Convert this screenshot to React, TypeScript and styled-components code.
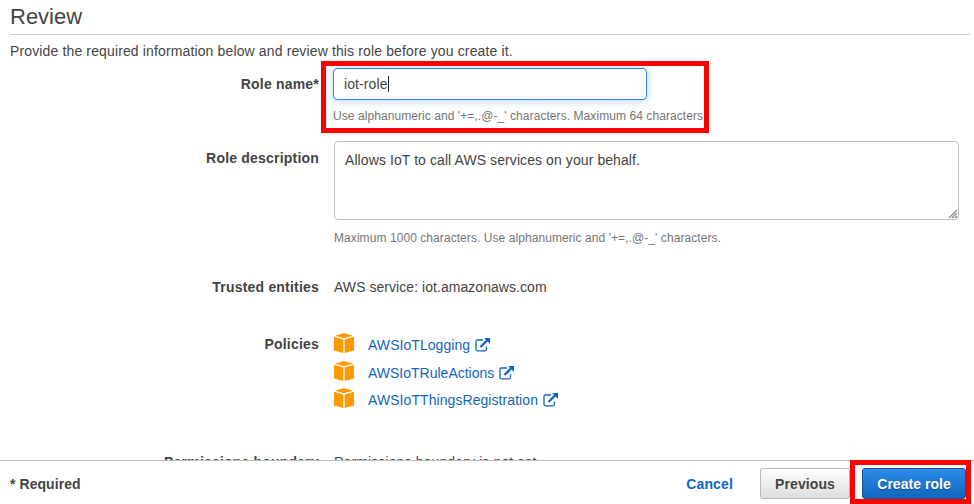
import React from 'react';
import styled, { createGlobalStyle } from 'styled-components';

const GlobalStyle = createGlobalStyle`
  * { box-sizing: border-box; }
  body {
    margin: 0;
    background: #fff;
    color: #444;
    font: 14px/20px "Liberation Sans", Arial, sans-serif;
  }
`;

const Page = styled.div`
  position: relative;
  display: flex;
  flex-direction: column;
  width: 974px;
  height: 504px;
  overflow: hidden;
`;

const Content = styled.main`
  height: 460px;
  padding: 0 4px 0 10px;
  overflow: hidden;
`;

const Title = styled.h1`
  height: 35px;
  margin: 0;
  padding-top: 2px;
  border-bottom: 1px solid #ccc;
  font-size: 22px;
  font-weight: 400;
  line-height: 30px;
`;

const Intro = styled.p`
  margin: 6px 0 0;
  letter-spacing: 0.135px;
`;

const Row = styled.div<{ $gap: number }>`
  display: grid;
  grid-template-columns: 309px 625px;
  column-gap: 15px;
  margin-top: ${(p) => p.$gap}px;
`;

const Label = styled.label<{ $offset?: number }>`
  padding-top: ${(p) => p.$offset ?? 0}px;
  text-align: right;
  font-weight: 700;
  letter-spacing: 0.2px;
`;

const Value = styled.div<{ $spacing: number }>`
  letter-spacing: ${(p) => p.$spacing}px;
`;

const NameInput = styled.div`
  display: flex;
  align-items: center;
  width: 314px;
  height: 32px;
  margin-left: -1px;
  padding: 0 10px;
  border: 1px solid #2f86dc;
  border-radius: 4px;
  box-shadow: 0 1px 8px rgba(60, 140, 225, 0.4);
  letter-spacing: 0.1px;
`;

const Caret = styled.span`
  width: 1px;
  height: 16px;
  background: #222;
`;

const Hint = styled.div<{ $gap: number; $shift?: number }>`
  margin: ${(p) => p.$gap}px 0 0 ${(p) => p.$shift ?? 0}px;
  color: #757575;
  font-size: 12px;
  line-height: 16px;
  letter-spacing: 0.07px;
  white-space: nowrap;
`;

const DescriptionBox = styled.div`
  display: flex;
  justify-content: space-between;
  height: 79px;
  padding: 8px 0 0 10px;
  border: 1px solid #bfbfbf;
  border-radius: 4px;
  letter-spacing: 0.085px;
`;

const Grip = styled.svg`
  align-self: flex-end;
`;

const PolicyList = styled.ul`
  display: flex;
  flex-direction: column;
  margin: 0;
  padding: 0;
  list-style: none;
`;

const Policy = styled.li`
  display: flex;
  align-items: flex-start;
  height: 27.5px;
`;

const PolicyLink = styled.a<{ $spacing: number }>`
  display: flex;
  gap: 5px;
  margin: 2px 0 0 14px;
  color: #1166bb;
  letter-spacing: ${(p) => p.$spacing}px;
`;

const LinkIcon = styled.svg`
  margin-top: 3px;
`;

const Footer = styled.footer`
  display: flex;
  align-items: flex-start;
  height: 44px;
  padding: 7px 8px 0 10px;
  border-top: 1px solid #bfbfbf;
  background: #fff;
  font-weight: 700;
  line-height: 32px;
`;

const Required = styled.span`
  flex: 1;
  letter-spacing: 0.06px;
`;

const Cancel = styled.a`
  margin-right: 27px;
  color: #1166cc;
  letter-spacing: 0.14px;
`;

const Button = styled.button<{ $primary?: boolean; $width: number }>`
  width: ${(p) => p.$width}px;
  height: 31px;
  padding: 1px 0 0;
  border: 1px solid ${(p) => (p.$primary ? '#145293' : '#b8b8b8')};
  border-radius: 3px;
  background: ${(p) => (p.$primary ? 'linear-gradient(#2d8bea, #1166bb)' : 'linear-gradient(#fff, #ddd)')};
  color: ${(p) => (p.$primary ? '#fff' : '#444')};
  text-shadow: ${(p) => (p.$primary ? '0 1px 1px #124e88' : 'none')};
  font: inherit;
  line-height: 28px;
  letter-spacing: ${(p) => (p.$primary ? 0.03 : 0.1)}px;
  & + & { margin-left: 12px; }
`;

const Highlight = styled.div<{ $x: number; $y: number; $w: number; $h: number }>`
  position: absolute;
  left: ${(p) => p.$x}px;
  top: ${(p) => p.$y}px;
  width: ${(p) => p.$w}px;
  height: ${(p) => p.$h}px;
  border: 5px solid #f00;
  pointer-events: none;
`;

const CubeIcon = () => (
  <svg width="20" height="20" viewBox="0 0 20 20" fill="#ff9900">
    <path d="M10 0 19 2.7 10 5.3 1 2.7Z" />
    <path d="M0 3.7 9.3 6.4V20L0 17.4Z" />
    <path d="M20 3.7 10.7 6.4V20L20 17.4Z" />
  </svg>
);

const ExternalIcon = () => (
  <LinkIcon width="16" height="14" viewBox="0 0 16 14" fill="none" stroke="#1166bb">
    <path d="M8 2H2.5Q1 2 1 3.5V11.3Q1 12.8 2.5 12.8H10Q11.5 12.8 11.5 11.3V8.5" strokeWidth="1.3" />
    <path d="M5.5 9 12 2.5" strokeWidth="2.3" />
    <path d="M9 0H15V6Z" fill="#1166bb" stroke="none" />
  </LinkIcon>
);

const policies = [
  { name: 'AWSIoTLogging', spacing: 0.05 },
  { name: 'AWSIoTRuleActions', spacing: 0 },
  { name: 'AWSIoTThingsRegistration', spacing: 0.07 },
];

export default function App() {
  return (
    <Page>
      <GlobalStyle />
      <Content>
        <Title>Review</Title>
        <Intro>Provide the required information below and review this role before you create it.</Intro>
        <Row $gap={7}>
          <Label $offset={6}>Role name*</Label>
          <div>
            <NameInput>iot-role<Caret /></NameInput>
            <Hint $gap={8} $shift={-1}>Use alphanumeric and '+=,.@-_' characters. Maximum 64 characters</Hint>
          </div>
        </Row>
        <Row $gap={17}>
          <Label $offset={7}>Role description</Label>
          <div>
            <DescriptionBox>
              Allows IoT to call AWS services on your behalf.
              <Grip width="10" height="10" viewBox="0 0 10 10" stroke="#888" strokeWidth="1.2">
                <path d="M1 9 9 1M4 9 9 4M7 9 9 7" />
              </Grip>
            </DescriptionBox>
            <Hint $gap={10}>Maximum 1000 characters. Use alphanumeric and '+=,.@-_' characters.</Hint>
          </div>
        </Row>
        <Row $gap={31}>
          <Label>Trusted entities</Label>
          <Value $spacing={0.05}>AWS service: iot.amazonaws.com</Value>
        </Row>
        <Row $gap={36}>
          <Label $offset={1}>Policies</Label>
          <PolicyList>
            {policies.map(({ name, spacing }) => (
              <Policy key={name}>
                <CubeIcon />
                <PolicyLink $spacing={spacing}>{name}<ExternalIcon /></PolicyLink>
              </Policy>
            ))}
          </PolicyList>
        </Row>
        <Row $gap={36}>
          <Label>Permissions boundary</Label>
          <Value $spacing={0.13}>Permissions boundary is not set</Value>
        </Row>
      </Content>
      <Footer>
        <Required>* Required</Required>
        <Cancel>Cancel</Cancel>
        <Button $width={90}>Previous</Button>
        <Button $primary $width={104}>Create role</Button>
      </Footer>
      <Highlight $x={321} $y={61} $w={388} $h={72} />
      <Highlight $x={850} $y={460} $w={121} $h={44} />
    </Page>
  );
}
